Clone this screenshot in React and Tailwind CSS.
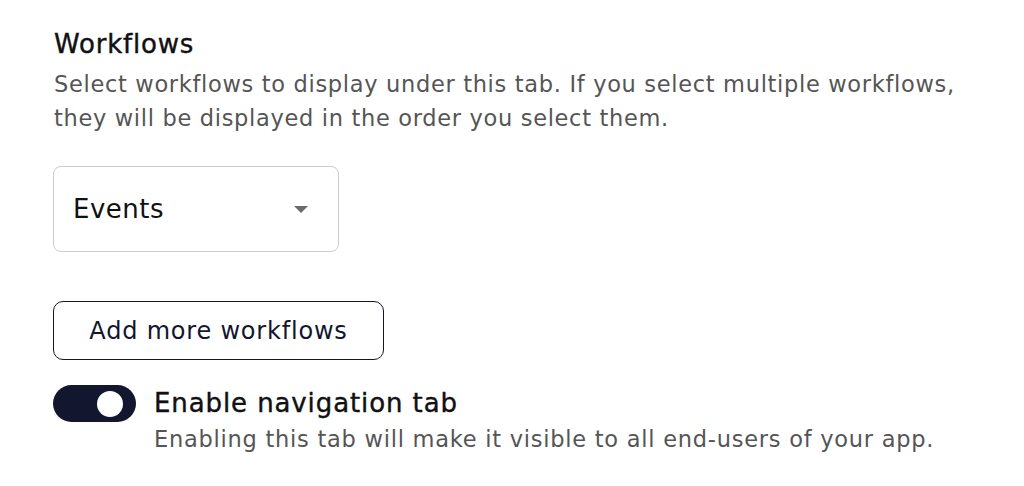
import { useState } from "react"

export default function App() {
  const [enabled, setEnabled] = useState(true)

  return (
    <main
      className="min-h-screen bg-white px-[54px] pt-[27px]"
      style={{ fontFamily: "'DejaVu Sans', 'Open Sans', sans-serif" }}
    >
      {/* Workflows */}
      <section>
        <h2 className="text-[26px] font-normal leading-[34px] tracking-[0.8px] text-[#111111] [-webkit-text-stroke:0.4px_#111111]">
          Workflows
        </h2>
        <p className="mt-[6px] text-[22.5px] leading-[34px] tracking-[0.68px] text-[#555555]">
          Select workflows to display under this tab. If you select multiple workflows,
          <br />
          they will be displayed in the order you select them.
        </p>

        <div className="mt-[31px] -ml-px flex h-[86px] w-[286px] items-center justify-between rounded-[8px] border border-[#cccccc] pl-[19px] pr-[30px]">
          <span className="text-[26px] tracking-[0.5px] text-[#111111]">Events</span>
          <span className="h-0 w-0 border-x-[7px] border-t-[7px] border-x-transparent border-t-[#6b6b6b]" />
        </div>

        <button
          type="button"
          className="mt-[49px] -ml-px flex h-[59px] w-[331px] items-center justify-center rounded-[10px] border border-[#12162f] text-[24px] tracking-[0.8px] text-[#12162f]"
        >
          Add more workflows
        </button>
      </section>

      {/* Toggle */}
      <section className="mt-[25px] flex items-start gap-[18px]">
        <button
          type="button"
          onClick={() => setEnabled(!enabled)}
          className={`-ml-px flex h-[37px] w-[83px] shrink-0 items-center rounded-full px-[13px] ${
            enabled ? "justify-end bg-[#12162f]" : "justify-start bg-gray-300"
          }`}
        >
          <span className="h-[26px] w-[26px] rounded-full bg-white" />
        </button>
        <div className="pt-px">
          <div className="text-[26px] leading-[34px] tracking-[0.9px] text-[#111111] [-webkit-text-stroke:0.4px_#111111]">
            Enable navigation tab
          </div>
          <p className="mt-[2px] text-[22.5px] leading-[34px] tracking-[0.75px] text-[#555555]">
            Enabling this tab will make it visible to all end-users of your app.
          </p>
        </div>
      </section>
    </main>
  )
}
